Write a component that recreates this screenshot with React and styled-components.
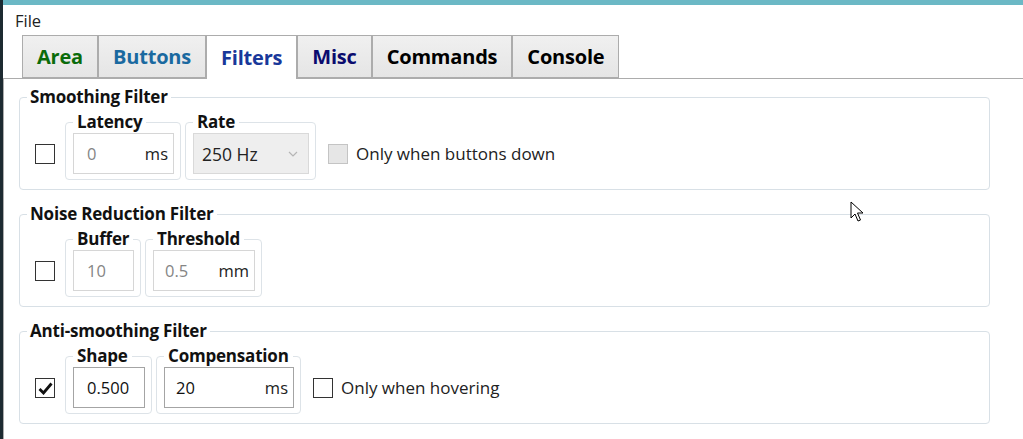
import React from 'react';
import styled, { createGlobalStyle } from 'styled-components';

const GlobalStyle = createGlobalStyle`
  html, body {
    margin: 0;
    padding: 0;
    background: #ffffff;
  }
  body {
    font-family: "Open Sans", "Noto Sans", "Liberation Sans", sans-serif;
    color: #1a1a1a;
  }
`;

const Window = styled.div`
  position: relative;
  width: 1020px;
  height: 439px;
  border-left: 3px solid #1d2a31;
  display: flex;
  flex-direction: column;
  overflow: hidden;
  background: #ffffff;
`;

const TitleStrip = styled.div`
  height: 5px;
  background: #6bb8c5;
  flex-shrink: 0;
`;

const MenuBar = styled.div`
  height: 30px;
  display: flex;
  align-items: center;
  padding-left: 12px;
  font-size: 16.5px;
  color: #222;
  flex-shrink: 0;
`;

const TabStrip = styled.div`
  display: flex;
  height: 43px;
  padding-left: 19px;
  flex-shrink: 0;
  position: relative;
  z-index: 1;
`;

const Tab = styled.div`
  display: flex;
  align-items: center;
  padding: 0 14px;
  height: ${p => (p.$active ? '44px' : '43px')};
  box-sizing: border-box;
  border: 1px solid #acacac;
  border-bottom: ${p => (p.$active ? 'none' : '1px solid #acacac')};
  background: ${p => (p.$active ? '#ffffff' : 'linear-gradient(#f0f0f0, #e5e5e5)')};
  font-size: 20px;
  font-weight: 700;
  color: ${p => p.$color};
  letter-spacing: -0.2px;
`;

const Panel = styled.div`
  flex: 1;
  border-top: 1px solid #acacac;
  border-left: 1px solid #acacac;
  padding: 9px 33px 0 15px;
  display: flex;
  flex-direction: column;
  gap: 15px;
`;

const Group = styled.fieldset`
  margin: 0;
  border: 1px solid #d8e0e6;
  border-radius: 4px;
  padding: 7px 8px 9px 15px;
  min-width: 0;
`;

const Legend = styled.legend`
  font-size: 17px;
  line-height: 18px;
  font-weight: 700;
  color: #111;
  padding: 0 3px;
  margin-left: -8px;
  letter-spacing: -0.2px;
`;

const Row = styled.div`
  display: flex;
  align-items: flex-end;
`;

const Box = styled.div`
  width: 20px;
  height: 20px;
  box-sizing: border-box;
  border: 1px solid ${p => (p.$disabled ? '#c4c4c4' : '#333333')};
  background: ${p => (p.$disabled ? '#e6e6e6' : '#ffffff')};
  display: flex;
  align-items: center;
  justify-content: center;
  flex-shrink: 0;
`;

const LeadCheck = styled.div`
  margin: 0 10px 16px 0;
`;

const OptionCheck = styled.label`
  display: flex;
  align-items: center;
  gap: 8px;
  margin: 0 0 15px 8px;
  font-size: 17px;
  color: #222;
`;

const SubGroup = styled.fieldset`
  margin: 0 4px 0 0;
  border: 1px solid #dde3e8;
  border-radius: 4px;
  padding: 2px 6px 5px 7px;
  min-width: 0;
`;

const SubLegend = styled.legend`
  font-size: 17px;
  line-height: 18px;
  font-weight: 700;
  color: #111;
  padding: 0 4px;
  letter-spacing: -0.2px;
`;

const Field = styled.div`
  width: ${p => p.$w}px;
  height: 41px;
  box-sizing: border-box;
  border: 1px solid ${p => (p.$disabled ? '#d6d6d6' : '#a4a4a4')};
  background: #ffffff;
  display: flex;
  align-items: center;
  justify-content: space-between;
  padding: 0 5px 0 ${p => p.$pl || 12}px;
  font-size: 16.5px;
`;

const Value = styled.span`
  color: ${p => (p.$disabled ? '#858585' : '#111')};
`;

const Unit = styled.span`
  color: #222;
`;

const Select = styled.div`
  width: 116px;
  height: 41px;
  box-sizing: border-box;
  border: 1px solid #d9d9d9;
  background: #eeeeee;
  display: flex;
  align-items: center;
  justify-content: space-between;
  padding: 0 10px 0 8px;
  font-size: 17.5px;
  color: #222;
`;

const Cursor = styled.svg`
  position: absolute;
  left: 847px;
  top: 201px;
`;

function CheckBox({ checked, disabled }) {
  return (
    <Box $disabled={disabled}>
      {checked && (
        <svg width="15" height="13" viewBox="0 0 15 13">
          <path d="M1.5 7 L5.5 11 L13.5 1.5" fill="none" stroke="#111" strokeWidth="2.8" />
        </svg>
      )}
    </Box>
  );
}

function Chevron() {
  return (
    <svg width="10" height="6" viewBox="0 0 10 6">
      <path d="M1 1 L5 5 L9 1" fill="none" stroke="#b5b5b5" strokeWidth="1.2" />
    </svg>
  );
}

const tabs = [
  { label: 'Area', color: '#0a6b0a' },
  { label: 'Buttons', color: '#1a69a0' },
  { label: 'Filters', color: '#19389a', active: true },
  { label: 'Misc', color: '#0b0b6e' },
  { label: 'Commands', color: '#000000' },
  { label: 'Console', color: '#000000' },
];

export default function App() {
  return (
    <>
      <GlobalStyle />
      <Window>
        <TitleStrip />
        <MenuBar>File</MenuBar>
        <TabStrip>
          {tabs.map(t => (
            <Tab key={t.label} $color={t.color} $active={t.active}>
              {t.label}
            </Tab>
          ))}
        </TabStrip>
        <Panel>
          <Group>
            <Legend>Smoothing Filter</Legend>
            <Row>
              <LeadCheck>
                <CheckBox />
              </LeadCheck>
              <SubGroup>
                <SubLegend>Latency</SubLegend>
                <Field $w={101} $disabled $pl={13}>
                  <Value $disabled>0</Value>
                  <Unit>ms</Unit>
                </Field>
              </SubGroup>
              <SubGroup>
                <SubLegend>Rate</SubLegend>
                <Select>
                  <span>250 Hz</span>
                  <Chevron />
                </Select>
              </SubGroup>
              <OptionCheck>
                <CheckBox disabled />
                Only when buttons down
              </OptionCheck>
            </Row>
          </Group>

          <Group>
            <Legend>Noise Reduction Filter</Legend>
            <Row>
              <LeadCheck>
                <CheckBox />
              </LeadCheck>
              <SubGroup>
                <SubLegend>Buffer</SubLegend>
                <Field $w={61} $disabled $pl={13}>
                  <Value $disabled>10</Value>
                </Field>
              </SubGroup>
              <SubGroup>
                <SubLegend>Threshold</SubLegend>
                <Field $w={102} $disabled $pl={11}>
                  <Value $disabled>0.5</Value>
                  <Unit>mm</Unit>
                </Field>
              </SubGroup>
            </Row>
          </Group>

          <Group>
            <Legend>Anti-smoothing Filter</Legend>
            <Row>
              <LeadCheck>
                <CheckBox checked />
              </LeadCheck>
              <SubGroup>
                <SubLegend>Shape</SubLegend>
                <Field $w={72} $pl={13}>
                  <Value>0.500</Value>
                </Field>
              </SubGroup>
              <SubGroup>
                <SubLegend>Compensation</SubLegend>
                <Field $w={130} $pl={11}>
                  <Value>20</Value>
                  <Unit>ms</Unit>
                </Field>
              </SubGroup>
              <OptionCheck>
                <CheckBox />
                Only when hovering
              </OptionCheck>
            </Row>
          </Group>
        </Panel>
        <Cursor width="14" height="22" viewBox="0 0 14 22">
          <path d="M1 1 L1 17 L5 13 L8 20 L10.5 19 L7.5 12 L13 12 Z" fill="#fff" stroke="#000" strokeWidth="1" strokeLinejoin="round" />
        </Cursor>
      </Window>
    </>
  );
}
